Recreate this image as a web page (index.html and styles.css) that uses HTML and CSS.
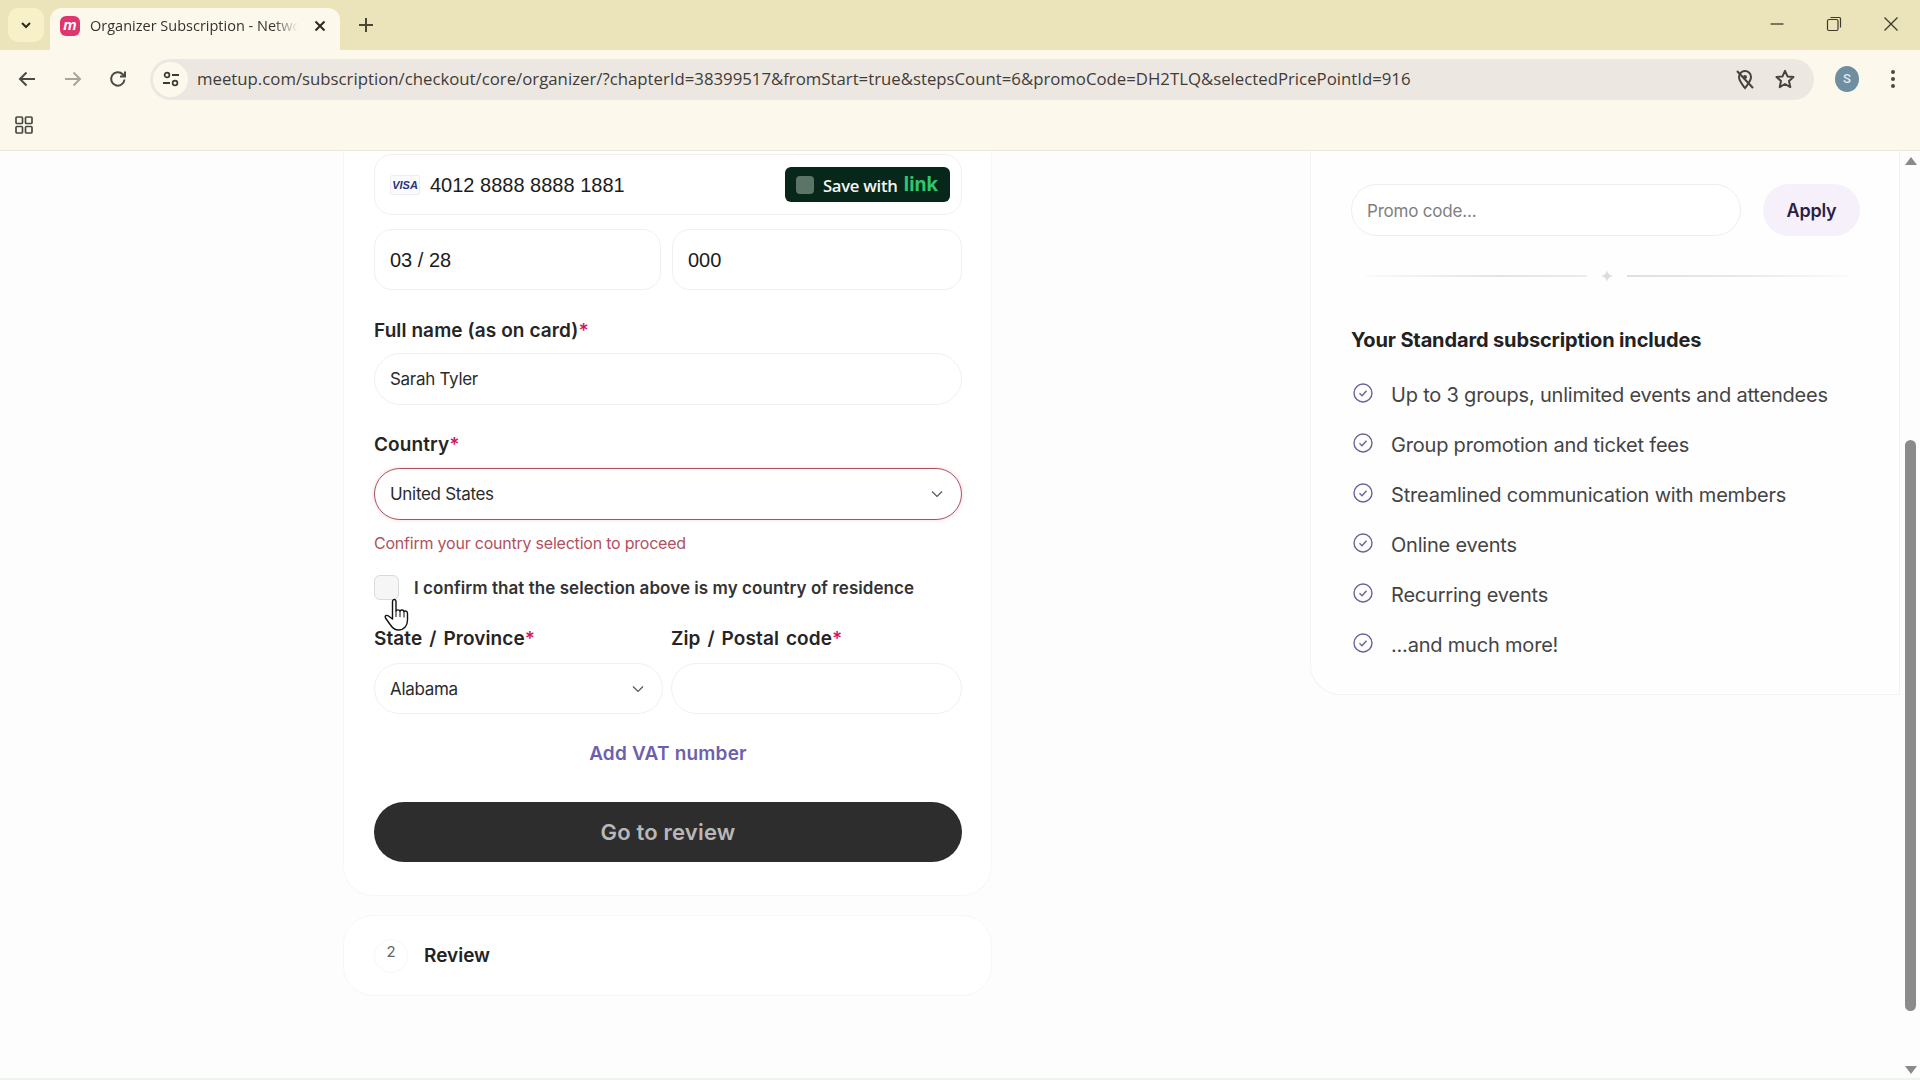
FILE: index.html
```html
<!DOCTYPE html>
<html lang="en">
<head>
<meta charset="utf-8">
<title>Organizer Subscription</title>
<link rel="stylesheet" href="styles.css">
</head>
<body>
<div class="browser">
  <header class="tabstrip">
    <button class="tab-menu">
      <svg width="14" height="14" viewBox="0 0 14 14"><path d="M3 5l4 4 4-4" fill="none" stroke="#2b2a20" stroke-width="2"/></svg>
    </button>
    <div class="tab">
      <span class="favicon">m</span>
      <span class="tab-title">Organizer Subscription - Netwo</span>
      <svg class="tab-close" width="14" height="14" viewBox="0 0 14 14"><path d="M2.5 2.5l9 9M11.5 2.5l-9 9" stroke="#2b2a20" stroke-width="2"/></svg>
    </div>
    <svg class="new-tab" width="16" height="16" viewBox="0 0 16 16"><path d="M8 1v14M1 8h14" stroke="#4a4733" stroke-width="2"/></svg>
    <div class="win-controls">
      <svg width="16" height="16" viewBox="0 0 16 16"><path d="M1.5 8h13" stroke="#3c3a2c" stroke-width="1.3"/></svg>
      <svg width="16" height="16" viewBox="0 0 16 16"><rect x="1.5" y="3.5" width="10.5" height="11" rx="1.5" fill="none" stroke="#3c3a2c" stroke-width="1.2"/><path d="M4.5 1.5h9a1 1 0 0 1 1 1v9" fill="none" stroke="#3c3a2c" stroke-width="1.2"/></svg>
      <svg width="16" height="16" viewBox="0 0 16 16"><path d="M1.5 1.5l13 13M14.5 1.5l-13 13" stroke="#3c3a2c" stroke-width="1.3"/></svg>
    </div>
  </header>

  <nav class="toolbar">
    <svg class="nav-icon" width="20" height="20" viewBox="0 0 20 20"><path d="M18 10H3M9.5 3.5L3 10l6.5 6.5" fill="none" stroke="#4a4a44" stroke-width="2"/></svg>
    <svg class="nav-icon" width="20" height="20" viewBox="0 0 20 20"><path d="M2 10h15M10.5 3.5L17 10l-6.5 6.5" fill="none" stroke="#a8a69c" stroke-width="2"/></svg>
    <svg class="nav-icon" width="20" height="20" viewBox="0 0 20 20"><path d="M16.5 10.5a6.7 6.7 0 1 1-1.8-5.2L17 7.5M17 2.5v5h-5" fill="none" stroke="#4a4a44" stroke-width="2"/></svg>
    <div class="omnibox">
      <span class="site-info">
        <svg width="18" height="18" viewBox="0 0 18 18"><circle cx="5" cy="5" r="2.4" fill="none" stroke="#3d3a36" stroke-width="1.7"/><path d="M10 5h7M1 13h7" stroke="#3d3a36" stroke-width="1.8"/><circle cx="13" cy="13" r="2.4" fill="none" stroke="#3d3a36" stroke-width="1.7"/></svg>
      </span>
      <span class="url">meetup.com/subscription/checkout/core/organizer/?chapterId=38399517&amp;fromStart=true&amp;stepsCount=6&amp;promoCode=DH2TLQ&amp;selectedPricePointId=916</span>
      <svg class="omni-icon" width="22" height="22" viewBox="0 0 22 22"><path d="M11 20c-3-4-6-7-6-11a6 6 0 0 1 12 0c0 4-3 7-6 11z" fill="none" stroke="#48423f" stroke-width="2"/><circle cx="11" cy="9" r="2" fill="#48423f"/><path d="M3 3l16 17" stroke="#48423f" stroke-width="2"/></svg>
      <svg class="omni-icon" width="22" height="22" viewBox="0 0 22 22"><path d="M11 2.8l2.5 5.6 6 .6-4.5 4.1 1.3 6L11 16l-5.3 3.1 1.3-6L2.500 9l6-.6z" fill="none" stroke="#48423f" stroke-width="2" stroke-linejoin="round"/></svg>
    </div>
    <span class="avatar">S</span>
    <svg class="more" width="6" height="20" viewBox="0 0 6 20"><circle cx="3" cy="3" r="2" fill="#4a4a44"/><circle cx="3" cy="10" r="2" fill="#4a4a44"/><circle cx="3" cy="17" r="2" fill="#4a4a44"/></svg>
  </nav>

  <div class="bookmarks">
    <svg width="18" height="18" viewBox="0 0 18 18"><g fill="none" stroke="#4a4a44" stroke-width="1.7"><rect x="1" y="1" width="6.500" height="6.500" rx="1"/><rect x="10.500" y="1" width="6.500" height="6.500" rx="1"/><rect x="1" y="10.500" width="6.500" height="6.500" rx="1"/><rect x="10.500" y="10.500" width="6.500" height="6.500" rx="1"/></g></svg>
  </div>

  <div class="viewport">
    <main class="content">
      <section class="left-col">
        <form class="card form-card">
          <div class="field field-tall card-field">
            <span class="visa">VISA</span>
            <span class="stripe-value">4012 8888 8888 1881</span>
            <span class="link-btn"><i class="link-check"></i><span class="link-save">Save with</span><b class="link-word">link</b></span>
          </div>
          <div class="two-col gap-s">
            <div class="field field-tall boxy"><span class="stripe-value">03 / 28</span></div>
            <div class="field field-tall boxy"><span class="stripe-value">000</span></div>
          </div>

          <label class="label lab-name">Full name (as on card)<em>*</em></label>
          <div class="field pill"><span class="value">Sarah Tyler</span></div>

          <label class="label lab-country">Country<em>*</em></label>
          <div class="field pill select-error">
            <span class="value">United States</span>
            <svg class="chev" width="14" height="14" viewBox="0 0 14 14"><path d="M2 4.500l5 5 5-5" fill="none" stroke="#555" stroke-width="1.200"/></svg>
          </div>
          <p class="error">Confirm your country selection to proceed</p>

          <div class="confirm">
            <span class="checkbox"></span>
            <span class="confirm-text">I confirm that the selection above is my country of residence</span>
          </div>

          <div class="two-col lab-row">
            <div class="col">
              <label class="label">State / Province<em>*</em></label>
              <div class="field pill pill-s">
                <span class="value">Alabama</span>
                <svg class="chev" width="14" height="14" viewBox="0 0 14 14"><path d="M2 4.500l5 5 5-5" fill="none" stroke="#555" stroke-width="1.200"/></svg>
              </div>
            </div>
            <div class="col">
              <label class="label">Zip / Postal code<em>*</em></label>
              <div class="field pill pill-s"></div>
            </div>
          </div>

          <a class="vat">Add VAT number</a>
          <button type="button" class="go">Go to review</button>
        </form>

        <div class="card review-card">
          <span class="step">2</span>
          <span class="review-title">Review</span>
        </div>
      </section>

      <aside class="side-card">
        <div class="promo">
          <div class="promo-input">Promo code...</div>
          <button type="button" class="apply">Apply</button>
        </div>
        <div class="divider">
          <span class="rule"></span>
          <svg width="14" height="14" viewBox="0 0 14 14"><path d="M7 1c.5 3.500 2.500 5.500 6 6-3.500.5-5.500 2.500-6 6-.5-3.500-2.500-5.500-6-6 3.500-.5 5.500-2.500 6-6z" fill="#dcdcdc"/></svg>
          <span class="rule"></span>
        </div>
        <h2 class="side-title">Your Standard subscription includes</h2>
        <ul class="features">
          <li><svg width="20" height="20" viewBox="0 0 20 20"><circle cx="10" cy="10" r="9" fill="none" stroke="#6b6299" stroke-width="1.400"/><path d="M6.500 10.300l2.500 2.400 4.500-5" fill="none" stroke="#6b6299" stroke-width="1.400"/></svg>Up to 3 groups, unlimited events and attendees</li>
          <li><svg width="20" height="20" viewBox="0 0 20 20"><circle cx="10" cy="10" r="9" fill="none" stroke="#6b6299" stroke-width="1.400"/><path d="M6.500 10.300l2.500 2.400 4.500-5" fill="none" stroke="#6b6299" stroke-width="1.400"/></svg>Group promotion and ticket fees</li>
          <li><svg width="20" height="20" viewBox="0 0 20 20"><circle cx="10" cy="10" r="9" fill="none" stroke="#6b6299" stroke-width="1.400"/><path d="M6.500 10.300l2.500 2.400 4.500-5" fill="none" stroke="#6b6299" stroke-width="1.400"/></svg>Streamlined communication with members</li>
          <li><svg width="20" height="20" viewBox="0 0 20 20"><circle cx="10" cy="10" r="9" fill="none" stroke="#6b6299" stroke-width="1.400"/><path d="M6.500 10.300l2.500 2.400 4.500-5" fill="none" stroke="#6b6299" stroke-width="1.400"/></svg>Online events</li>
          <li><svg width="20" height="20" viewBox="0 0 20 20"><circle cx="10" cy="10" r="9" fill="none" stroke="#6b6299" stroke-width="1.400"/><path d="M6.500 10.300l2.500 2.400 4.500-5" fill="none" stroke="#6b6299" stroke-width="1.400"/></svg>Recurring events</li>
          <li><svg width="20" height="20" viewBox="0 0 20 20"><circle cx="10" cy="10" r="9" fill="none" stroke="#6b6299" stroke-width="1.400"/><path d="M6.500 10.300l2.500 2.400 4.500-5" fill="none" stroke="#6b6299" stroke-width="1.400"/></svg>...and much more!</li>
        </ul>
      </aside>
    </main>

    <div class="scrollbar">
      <span class="arrow-up"></span>
      <span class="thumb"></span>
      <span class="arrow-down"></span>
    </div>

    <svg class="cursor" width="28" height="34" viewBox="0 0 28 34"><path d="M9 2c1.500-1 3-.500 3 1.500V13c.5-1.500 3.500-1.500 4 0 .5-1.500 3.500-1.500 4 .5 1-1 3.500-.5 3.500 2V22c0 5-3 10-9 10-4 0-6-2-8-5l-5-7c-1-2 1-3.500 3-2l4 3V4c0-1 .2-1.500.5-2z" fill="#fff" stroke="#111" stroke-width="1.400" stroke-linejoin="round"/><path d="M12 13v6M16 13v6M20 13.500v6" stroke="#111" stroke-width="1"/></svg>
  </div>
</div>
</body>
</html>
```

FILE: styles.css
```css
* { box-sizing: border-box; }
html, body { margin: 0; height: 100%; overflow: hidden; }
body { font-family: Inter, "Liberation Sans", sans-serif; color: #222; background: #fcfdfc; }
button { font: inherit; border: 0; padding: 0; }
.browser { width: 1920px; height: 1080px; display: flex; flex-direction: column; position: relative; }

/* Tab strip */
.tabstrip { height: 50px; background: #ebe3b9; display: flex; align-items: flex-end; padding-left: 8px; flex: none; }
.tab-menu { width: 36px; height: 34px; margin-bottom: 8px; background: #f7f0c9; border-radius: 10px; display: flex; align-items: center; justify-content: center; }
.tab { width: 290px; height: 42px; margin-left: 6px; background: #fdf8ec; border-radius: 12px 12px 0 0; display: flex; align-items: center; padding: 0 13px 7px 10px; gap: 10px; }
.favicon { width: 20px; height: 20px; border-radius: 6px; background: #e0356f; color: #fff; font: italic 700 15px/17px "Liberation Sans", sans-serif; text-align: center; flex: none; }
.tab-title { font: 14.500px/20px "Open Sans", sans-serif; color: #33322c; white-space: nowrap; width: 208px; -webkit-mask-image: linear-gradient(to right, #000 88%, transparent 100%); mask-image: linear-gradient(to right, #000 88%, transparent 100%); flex: none; }
.tab-close { flex: none; margin-left: 5px; }
.new-tab { margin: 0 0 17px 18px; }
.win-controls { margin-left: auto; display: flex; gap: 41px; padding: 0 21px 18px 0; align-self: flex-end; }

/* Toolbar */
.toolbar { height: 50px; background: #fdf8ec; display: flex; align-items: center; flex: none; padding-left: 17px; padding-top: 8px; }
.nav-icon { margin-right: 25.500px; flex: none; }
.omnibox { margin-left: -3.500px; width: 1664px; height: 41px; border-radius: 21px; background: #ede7e2; display: flex; align-items: center; padding: 0 18px 0 3px; flex: none; }
.site-info { width: 35px; height: 35px; border-radius: 50%; background: #fdf8ec; display: flex; align-items: center; justify-content: center; flex: none; }
.url { font: 16.770px/22px "Open Sans", sans-serif; color: #3f3c38; margin-left: 9px; white-space: nowrap; flex: none; width: 1214px; }
.omni-icon { flex: none; margin-left: 18px; }
.omni-icon:first-of-type { margin-left: auto; }
.avatar { width: 24px; height: 26px; border-radius: 50%; background: #6f8e9f; color: #dfeaf0; font: 500 13px/26px Roboto, sans-serif; text-align: center; margin-left: 21px; flex: none; }
.more { margin-left: 31px; flex: none; }

/* Bookmarks */
.bookmarks { height: 51px; background: #fdf8ec; border-bottom: 1px solid #ebe7da; display: flex; align-items: center; padding-left: 15px; flex: none; }

/* Page */
.viewport { flex: 1; display: flex; min-height: 0; position: relative; background: #fcfdfc; border-bottom: 2px solid #eff2ef; }
.content { flex: 1; display: flex; align-items: flex-start; padding-left: 343px; }
.left-col { width: 649px; display: flex; flex-direction: column; gap: 19px; flex: none; }
.card { background: #fff; border: 1px solid #f6f7f6; }
.form-card { border-top: 0; border-radius: 0 0 30px 30px; padding: 3px 29px 33px 30px; height: 745px; }
.field { display: flex; align-items: center; background: #fff; border: 1px solid #f0f0f0; padding: 0 15px; }
.field-tall { height: 61px; border-radius: 18px; }
.card-field { padding-right: 11px; }
.boxy { flex: 1; }
.boxy:first-child { flex: none; width: 287px; }
.visa { width: 30px; height: 20px; border: 1px solid #eceef5; border-radius: 2px; background: #fbfbfe; font: italic 700 11px/18px "Liberation Sans", sans-serif; color: #27337d; text-align: center; margin-right: 10px; flex: none; }
.stripe-value { font: 20px/24px "Liberation Sans", sans-serif; color: #1c1c1c; }
.link-btn { margin-left: auto; width: 165px; height: 35px; background: #07271b; border-radius: 6px; display: flex; align-items: center; padding-left: 11px; }
.link-check { width: 18px; height: 18px; border-radius: 4px; background: #5c7368; margin-right: 9px; flex: none; }
.link-save { font: 600 16.700px/20px "Open Sans", sans-serif; color: #f4f8f5; margin-right: 6px; letter-spacing: -0.3px; margin-top: 2px; }
.link-word { font: 700 19px/20px "Open Sans", sans-serif; color: #2fc76e; margin-top: -2px; letter-spacing: -0.4px; }
.two-col { display: flex; }
.gap-s { gap: 11px; margin-top: 14px; }
.label { display: block; font-size: 19px; line-height: 24px; font-weight: 600; color: #252525; letter-spacing: 0.1px; }
.label em { font-style: normal; color: #cf1a62; }
.lab-name { margin-top: 29px; margin-bottom: 10px; }
.lab-country { margin-top: 28px; margin-bottom: 11px; }
.pill { height: 52px; border-radius: 26px; justify-content: space-between; padding-right: 17px; }
.pill-s { height: 51px; }
.value { font-size: 17px; line-height: 22px; color: #2b2b2b; letter-spacing: -0.3px; }
.select-error { border: 1.500px solid #a9545c; box-shadow: 0 0 4px #f6d5db; }
.error { margin: 13px 0 0; font-size: 16px; line-height: 20px; color: #b2505f; letter-spacing: -0.22px; }
.confirm { display: flex; align-items: center; gap: 15px; margin-top: 22px; height: 25px; }
.checkbox { width: 25px; height: 25px; border: 1.500px solid #dadada; border-radius: 6px; background: #f6f6f6; flex: none; }
.confirm-text { font-size: 17px; font-weight: 600; color: #333; letter-spacing: 0.06px; white-space: nowrap; }
.lab-row { gap: 8px; margin-top: 27px; }
.lab-row .label { margin-bottom: 12px; word-spacing: 2px; }
.col { flex: 1; }
.col:first-child { flex: none; width: 289px; }
.vat { display: block; text-align: center; margin-top: 28px; font-size: 19px; line-height: 24px; font-weight: 600; color: #6d5fae; letter-spacing: 0.2px; }
.go { display: block; width: 100%; height: 60px; margin-top: 36px; border-radius: 30px; background: #2d2d2d; color: #b8b8b8; font-size: 22px; font-weight: 600; letter-spacing: 0.2px; }
.review-card { height: 81px; border-radius: 30px; display: flex; align-items: center; padding-left: 30px; }
.step { width: 34px; height: 34px; border-radius: 50%; border: 1px solid #f8f8f8; font: 15px/24px Inter, sans-serif; color: #666; text-align: center; flex: none; }
.review-title { margin-left: 16px; font-size: 19px; font-weight: 600; color: #232323; letter-spacing: 0; }

/* Side */
.side-card { width: 590px; margin-left: 318px; height: 544px; background: #fefefe; border: 1px solid #f2f3f2; border-top: 0; border-radius: 0 0 0 30px; padding: 33px 0 0 40px; flex: none; }
.promo { display: flex; gap: 22px; }
.promo-input { width: 390px; height: 52px; border-radius: 26px; background: #fff; border: 1px solid #eeeeee; padding-left: 15px; font-size: 17px; line-height: 52px; color: #808080; letter-spacing: -0.2px; }
.apply { width: 97px; height: 52px; border-radius: 26px; background: #f6f0fb; color: #2a1f47; font-size: 18px; font-weight: 600; letter-spacing: -0.2px; }
.divider { display: flex; align-items: center; gap: 13px; margin: 33px 0 0 15px; width: 481px; }
.rule { flex: 1; height: 2px; background: linear-gradient(to right, #fafafa, #e3e3e3 60%, #ececec); }
.rule:last-child { background: linear-gradient(to right, #dfdfdf, #e8e8e8 50%, #fafafa); }
.side-title { margin: 45px 0 0; font-size: 20px; line-height: 24px; font-weight: 700; color: #222; letter-spacing: -0.13px; }
.features { list-style: none; margin: 18px 0 0; padding: 0; }
.features li { height: 50px; display: flex; align-items: center; font-size: 20px; color: #444; gap: 18px; white-space: nowrap; letter-spacing: -0.2px; padding-left: 2px; }
.features svg { flex: none; margin-top: -4px; }

/* Scrollbar */
.scrollbar { width: 15px; margin-left: 5px; flex: none; position: relative; display: flex; flex-direction: column; align-items: center; padding: 6px 4px 4px 0; }
.arrow-up { width: 0; height: 0; border: 6px solid transparent; border-top: 0; border-bottom: 8px solid #8a8a8a; }
.thumb { width: 11px; height: 571px; margin-top: 275px; background: #8b8b8b; border-radius: 6px; flex: none; }
.arrow-down { width: 0; height: 0; margin-top: auto; border: 6px solid transparent; border-bottom: 0; border-top: 8px solid #8a8a8a; }

.cursor { position: absolute; left: 384px; top: 447px; }
```
